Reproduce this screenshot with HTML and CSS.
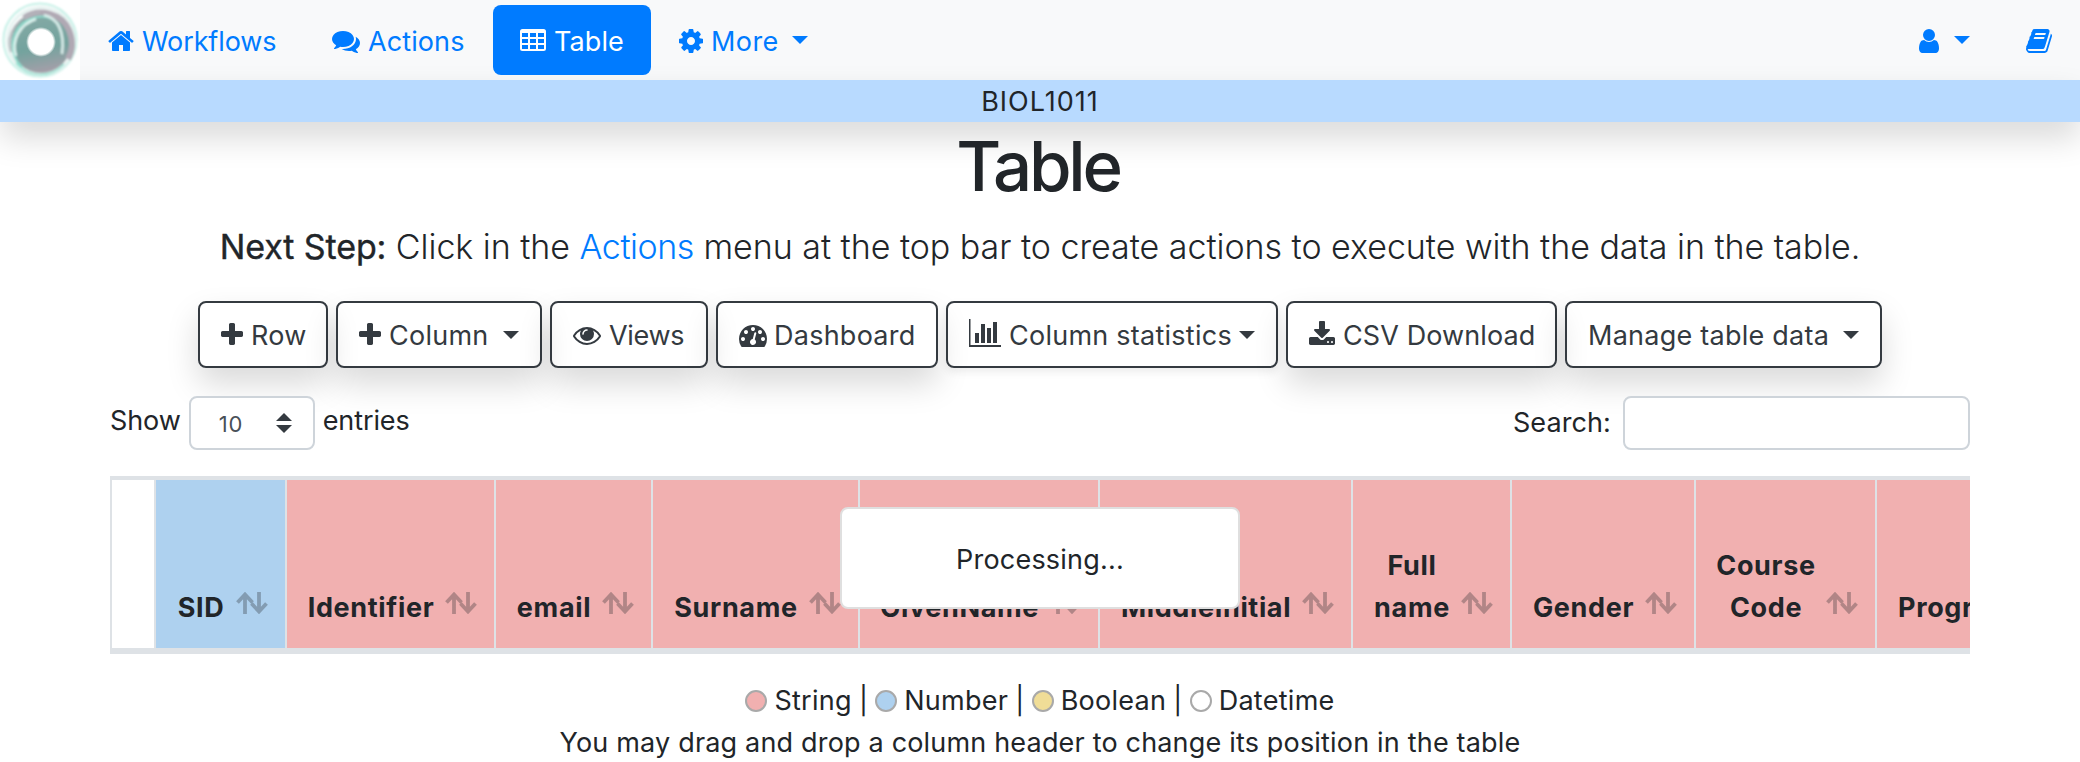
FILE: index.html
```html
<!DOCTYPE html>
<html lang="en">
<head>
<meta charset="utf-8">
<title>Table</title>
<link rel="stylesheet" href="styles.css">
</head>
<body>
<svg class="defs" width="0" height="0">
  <symbol id="sort" viewBox="0 0 32 22">
    <path d="M9 22V2M1.500 10.500 9 2.500l7.500 8M23 0v20M15.500 11.500 23 19.500l7.500-8" fill="none" stroke="currentColor" stroke-width="3.800"/>
  </symbol>
  <symbol id="plus" viewBox="0 0 1792 1792">
    <path d="M1600 736v192q0 40-28 68t-68 28h-416v416q0 40-28 68t-68 28h-192q-40 0-68-28t-28-68v-416h-416q-40 0-68-28t-28-68v-192q0-40 28-68t68-28h416v-416q0-40 28-68t68-28h192q40 0 68 28t28 68v416h416q40 0 68 28t28 68z"/>
  </symbol>
</svg>

<nav class="navbar">
  <a class="logo">
    <svg width="80" height="80" viewBox="0 0 80 80">
      <defs>
        <linearGradient id="disc" x1=".3" y1="0" x2=".5" y2="1">
          <stop offset="0" stop-color="#86aaa6"/><stop offset=".6" stop-color="#73a39e"/><stop offset="1" stop-color="#a59fa9"/>
        </linearGradient>
        <radialGradient id="hole"><stop offset=".82" stop-color="#fff"/><stop offset="1" stop-color="#fff" stop-opacity="0"/></radialGradient>
        <filter id="soft"><feGaussianBlur stdDeviation=".8"/></filter>
      </defs>
      <g filter="url(#soft)" fill="none">
        <circle cx="40" cy="40" r="36.500" stroke="#c4f0e6" stroke-width="2"/>
        <circle cx="41" cy="41" r="33.500" stroke="#e6f3f1" stroke-width="3"/>
        <circle cx="41" cy="43" r="30" fill="url(#disc)"/>
        <path d="M24 18C40 7 62 14 69 30c5 12 3 22-1 29" stroke="#b0a9b4" stroke-width="6"/>
        <path d="M11 52C5 34 18 15 40 12" stroke="#b4b6bb" stroke-width="2"/>
        <path d="M22 67C7 53 11 29 28 20c12-6 24-4 31 5" stroke="#8fdccd" stroke-width="2"/>
        <path d="M16 56C11 40 20 24 36 19" stroke="#dff4f0" stroke-width="2.500"/>
        <path d="M44 15c14 3 21 17 18 39" stroke="#dcefec" stroke-width="2.500"/>
        <path d="M16 63C28 77 50 79 64 64" stroke="#8ee0ce" stroke-width="1.500"/>
      </g>
      <circle cx="41" cy="42" r="15" fill="url(#hole)"/>
    </svg>
  </a>
  <a class="nav-item workflows">
    <svg class="icon" viewBox="0 0 1792 1792"><path d="M1472 992v480q0 26-19 45t-45 19h-384v-384h-256v384h-384q-26 0-45-19t-19-45v-480q0-1 .5-3t.5-3l575-474 575 474q1 2 1 6zm223-69l-62 74q-8 9-21 11h-3q-13 0-21-7l-692-577-692 577q-12 8-24 7-13-2-21-11l-62-74q-8-10-7-23.500t11-21.500l719-599q32-26 76-26t76 26l244 204v-195q0-14 9-23t23-9h192q14 0 23 9t9 23v408l219 182q10 8 11 21.500t-7 23.500z"/></svg>
    <span>Workflows</span>
  </a>
  <a class="nav-item actions">
    <svg class="icon" viewBox="0 0 1792 1792"><path d="M1408 768q0 139-94 257t-256.500 186.500-353.500 68.500q-86 0-176-16-124 88-278 128-36 9-86 16h-3q-11 0-20.500-8t-11.500-21q-1-3-1-6.500t.5-6.500 2-6l2.500-5 3.500-5.500 4-5 4.500-5 4-4.500q5-6 23-25t26-29.500 22.500-29 25-38.500 20.500-44q-124-72-195-177t-71-224q0-139 94-257t256.500-186.500 353.500-68.500 353.500 68.500 256.500 186.500 94 257zm384 256q0 120-71 224.500t-195 176.500q10 24 20.500 44t25 38.500 22.500 29 26 29.500 23 25q1 1 4 4.500t4.500 5 4 5 3.500 5.500l2.500 5 2 6 .5 6.500-1 6.500q-3 14-13 22t-22 7q-50-7-86-16-154-40-278-128-90 16-176 16-271 0-472-132 58 4 88 4 161 0 309-45t264-129q125-92 192-212t67-254q0-77-23-152 129 71 204 178t75 230z"/></svg>
    <span>Actions</span>
  </a>
  <a class="nav-item active">
    <svg class="icon" viewBox="0 0 28 28"><path fill-rule="evenodd" d="M3.500 2h21A2.500 2.500 0 0 1 27 4.500v17a2.500 2.500 0 0 1-2.500 2.500h-21A2.500 2.500 0 0 1 1 21.500v-17A2.500 2.500 0 0 1 3.500 2zM3 6v4h6V6zm8 0v4h6V6zm8 0v4h6V6zM3 12v4h6v-4zm8 0v4h6v-4zm8 0v4h6v-4zM3 18v4h6v-4zm8 0v4h6v-4zm8 0v4h6v-4z"/></svg>
    <span>Table</span>
  </a>
  <a class="nav-item more">
    <svg class="icon" viewBox="0 0 1792 1792"><path d="M1152 896q0-106-75-181t-181-75-181 75-75 181 75 181 181 75 181-75 75-181zm512-109v222q0 12-8 23t-20 13l-185 28q-19 54-39 91 35 50 107 138 10 12 10 25t-9 23q-27 37-99 108t-94 71q-12 0-26-9l-138-108q-44 23-91 38-16 136-29 186-7 28-36 28h-222q-14 0-24.500-8.500t-11.500-21.500l-28-184q-49-16-90-37l-141 107q-10 9-25 9-14 0-25-11-126-114-165-168-7-10-7-23 0-12 8-23 15-21 51-66.500t54-70.500q-27-50-41-99l-183-27q-13-2-21-12.500t-8-23.500v-222q0-12 8-23t19-13l186-28q14-46 39-92-40-57-107-138-10-12-10-24 0-10 9-23 26-36 98.500-107.500t94.500-71.500q13 0 26 10l138 107q44-23 91-38 16-136 29-186 7-28 36-28h222q14 0 24.500 8.500t11.500 21.500l28 184q49 16 90 37l142-107q9-9 24-9 13 0 25 10 129 119 165 170 7 8 7 22 0 12-8 23-15 21-51 66.500t-54 70.500q26 50 41 98l183 28q13 2 21 12.500t8 23.500z"/></svg>
    <span>More</span>
    <i class="caret"></i>
  </a>
  <a class="nav-item user">
    <svg class="icon" viewBox="0 0 1792 1792"><path d="M1536 1399q0 109-62.500 187t-150.500 78h-854q-88 0-150.500-78t-62.500-187q0-85 8.500-160.500t31.500-152 58.500-131 94-89 134.500-34.500q131 128 313 128t313-128q76 0 134.500 34.500t94 89 58.500 131 31.500 152 8.500 160.500zm-256-887q0 159-112.500 271.500t-271.500 112.500-271.500-112.500-112.500-271.500 112.500-271.500 271.500-112.500 271.500 112.500 112.500 271.500z"/></svg>
    <i class="caret"></i>
  </a>
  <a class="nav-item docs">
    <svg class="icon" viewBox="0 0 1792 1792"><path d="M1703 478q40 57 18 129l-275 906q-19 64-76.500 107.500t-122.500 43.500h-923q-77 0-148.500-53.500t-99.500-131.500q-24-67-2-127 0-4 3-27t4-37q1-8-3-21.500t-3-19.500q2-11 8-21t16.500-23.500 16.500-23.500q23-38 45-91.500t30-91.500q3-10 .5-30t-.5-28q3-11 17-28t17-23q21-36 42-92t25-90q1-9-2.500-32t.5-28q4-13 22-30.500t22-22.500q19-26 42.500-84.500t27.500-96.500q1-8-3-25.500t-2-26.500q2-8 9-18t18-23 17-21q8-12 16.500-30.500t15-35 16-36 19.500-32 26.500-23.500 36-11.500 47.500 5.500l-1 3q38-9 51-9h761q74 0 114 56t18 130l-274 906q-36 119-71.500 153.500t-128.500 34.500h-869q-27 0-38 15-11 16-1 43 24 70 144 70h923q29 0 56-15.500t35-41.500l300-987q7-22 5-57 38 15 59 43zm-1064 2q-4 13 2 22.500t20 9.500h608q13 0 25.500-9.500t16.500-22.500l21-64q4-13-2-22.500t-20-9.500h-608q-13 0-25.500 9.500t-16.500 22.500zm-83 256q-4 13 2 22.500t20 9.500h608q13 0 25.500-9.500t16.500-22.500l21-64q4-13-2-22.500t-20-9.500h-608q-13 0-25.500 9.500t-16.500 22.500z"/></svg>
  </a>
</nav>
<div class="workflow-name">BIOL1011</div>

<main>
  <h1>Table</h1>
  <p class="lead"><b>Next Step:</b> Click in the <a>Actions</a> menu at the top bar to create actions to execute with the data in the table.</p>

  <div class="toolbar">
    <button class="btn row-btn"><svg class="icon"><use href="#plus"/></svg><span>Row</span></button>
    <button class="btn column-btn"><svg class="icon"><use href="#plus"/></svg><span>Column</span><i class="caret"></i></button>
    <button class="btn views-btn">
      <svg class="icon" viewBox="0 0 1792 1792"><path d="M1664 960q-152-236-381-353 61 104 61 225 0 185-131.500 316.500t-316.500 131.500-316.500-131.500-131.500-316.500q0-121 61-225-229 117-381 353 133 205 333.500 326.500t434.500 121.500 434.500-121.500 333.500-326.500zm-720-384q0-20-14-34t-34-14q-125 0-214.500 89.500t-89.500 214.500q0 20 14 34t34 14 34-14 14-34q0-86 61-147t147-61q20 0 34-14t14-34zm848 384q0 34-20 69-140 230-376.500 368.500t-499.500 138.500-499.500-139-376.500-368q-20-35-20-69t20-69q140-229 376.500-368t499.500-139 499.500 139 376.500 368q20 35 20 69z"/></svg>
      <span>Views</span>
    </button>
    <button class="btn dashboard-btn">
      <svg class="icon" viewBox="0 0 1792 1792"><path d="M384 1152q0-53-37.500-90.500t-90.500-37.500-90.500 37.500-37.500 90.500 37.500 90.500 90.500 37.500 90.500-37.500 37.500-90.500zm192-448q0-53-37.500-90.500t-90.500-37.500-90.500 37.500-37.500 90.500 37.500 90.500 90.500 37.500 90.500-37.500 37.500-90.500zm428 481l101-382q6-26-7.500-48.500t-38.500-29.500-48 6.500-30 39.500l-101 382q-60 5-107 43.500t-63 98.500q-20 77 20 146t117 89 146-20 89-117q16-60-6-117t-72-91zm660-33q0-53-37.500-90.500t-90.500-37.500-90.500 37.500-37.500 90.500 37.500 90.500 90.500 37.500 90.500-37.500 37.500-90.500zm-640-640q0-53-37.500-90.500t-90.500-37.500-90.500 37.500-37.500 90.500 37.500 90.500 90.500 37.500 90.500-37.500 37.500-90.500zm448 192q0-53-37.500-90.500t-90.500-37.500-90.500 37.500-37.500 90.500 37.500 90.500 90.500 37.500 90.500-37.500 37.500-90.500zm320 448q0 261-141 483-19 29-54 29h-1402q-35 0-54-29-141-221-141-483 0-182 71-348t191-286 286-191 348-71 348 71 286 191 191 286 71 348z"/></svg>
      <span>Dashboard</span>
    </button>
    <button class="btn stats-btn">
      <svg class="icon chart" viewBox="0 0 32 28"><path d="M0 0h1.500v26h30.500v2H0zM6 14h4v10H6zM12 5h4v19h-4zM18 9h4v15h-4zM24 3h4v21h-4z"/></svg>
      <span>Column statistics</span><i class="caret"></i>
    </button>
    <button class="btn csv-btn">
      <svg class="icon" viewBox="0 0 1792 1792"><path d="M1344 1344q0-26-19-45t-45-19-45 19-19 45 19 45 45 19 45-19 19-45zm256 0q0-26-19-45t-45-19-45 19-19 45 19 45 45 19 45-19 19-45zm128-224v320q0 40-28 68t-68 28h-1472q-40 0-68-28t-28-68v-320q0-40 28-68t68-28h465l135 136q58 56 136 56t136-56l136-136h464q40 0 68 28t28 68zm-325-569q17 41-14 70l-448 448q-18 19-45 19t-45-19l-448-448q-31-29-14-70 17-39 59-39h256v-448q0-26 19-45t45-19h256q26 0 45 19t19 45v448h256q42 0 59 39z"/></svg>
      <span>CSV Download</span>
    </button>
    <button class="btn manage-btn"><span>Manage table data</span><i class="caret"></i></button>
  </div>

  <div class="controls">
    <label class="length">Show
      <span class="select"><span>10</span><svg width="16" height="20" viewBox="0 0 16 20"><path d="M0 8 8 0l8 8zM0 12h16l-8 8z"/></svg></span>
      entries</label>
    <label class="search">Search:<input type="text"></label>
  </div>

  <div class="table-wrap">
    <div class="thead">
      <div class="th blank"></div>
      <div class="th number">SID<svg class="sort"><use href="#sort"/></svg></div>
      <div class="th">Identifier<svg class="sort"><use href="#sort"/></svg></div>
      <div class="th">email<svg class="sort"><use href="#sort"/></svg></div>
      <div class="th">Surname<svg class="sort"><use href="#sort"/></svg></div>
      <div class="th">GivenName<svg class="sort"><use href="#sort"/></svg></div>
      <div class="th">MiddleInitial<svg class="sort"><use href="#sort"/></svg></div>
      <div class="th">Full<br>name<svg class="sort"><use href="#sort"/></svg></div>
      <div class="th">Gender<svg class="sort"><use href="#sort"/></svg></div>
      <div class="th">Course<br>Code<svg class="sort"><use href="#sort"/></svg></div>
      <div class="th last">Program<svg class="sort"><use href="#sort"/></svg></div>
    </div>
    <div class="processing">Processing...</div>
  </div>

  <div class="legend">
    <div><i class="dot string"></i> String | <i class="dot num"></i> Number | <i class="dot bool"></i> Boolean | <i class="dot"></i> Datetime</div>
    <div>You may drag and drop a column header to change its position in the table</div>
  </div>
</main>
</body>
</html>
```

FILE: styles.css
```css
* { box-sizing: border-box; }
body {
  margin: 0;
  height: 762px;
  overflow: hidden;
  background: #fff;
  color: #212529;
  font: 400 27px/42px Inter, "Liberation Sans", sans-serif;
  letter-spacing: .2px;
}
.defs { display: block; position: absolute; }
.icon { width: 28px; height: 28px; flex: none; fill: currentColor; }
.caret {
  flex: none;
  width: 0;
  height: 0;
  border: 8px solid transparent;
  border-top-color: currentColor;
  border-bottom: 0;
}

.navbar { display: flex; align-items: center; height: 80px; background: #f8f9fa; color: #007bff; }
.logo { width: 80px; height: 80px; background: #fff; }
.logo svg { display: block; }
.nav-item { display: flex; align-items: center; height: 70px; padding-top: 2px; border-radius: 8px; white-space: nowrap; }
.nav-item span, .btn span { padding-top: 2px; }
.nav-item .caret { margin-top: -2px; }
.workflows { width: 225px; padding-left: 27px; letter-spacing: -.12px; }
.workflows span { margin-left: 7px; }
.actions { width: 188px; padding-left: 27px; letter-spacing: .1px; }
.actions span { margin-left: 8px; }
.active { width: 158px; padding-left: 26px; background: #007bff; color: #fff; letter-spacing: .1px; }
.active span { margin-left: 7px; }
.more { padding-left: 26px; letter-spacing: .4px; }
.more span { width: 81px; margin: 0 0 0 6px; }
.user { margin-left: auto; width: 110px; }
.user .caret { margin-left: 11px; }
.docs { width: 55px; }

.workflow-name {
  height: 42px;
  padding-top: 1px;
  background: #b8daff;
  text-align: center;
  letter-spacing: 1px;
  box-shadow: 0 16px 32px rgba(0, 0, 0, .15);
}

h1 { margin: 2px 0 0 -4px; font-size: 69px; font-weight: 500; line-height: 84px; letter-spacing: -3.200px; text-align: center; }
.lead { margin: 13px 0 0; font-size: 34px; font-weight: 340; line-height: 52px; letter-spacing: -.03px; text-align: center; white-space: nowrap; }
.lead b { font-weight: 400; letter-spacing: -.1px; -webkit-text-stroke: .4px currentColor; }
.lead a { color: #007bff; letter-spacing: -.45px; }

.toolbar { display: flex; justify-content: center; gap: 8px; margin-top: 28px; }
.btn {
  display: flex;
  align-items: center;
  height: 67px;
  padding: 0;
  border: 2px solid #343a40;
  border-radius: 8px;
  background: transparent;
  color: #343a40;
  font: inherit;
  letter-spacing: .25px;
  white-space: nowrap;
  box-shadow: 0 16px 32px rgba(0, 0, 0, .15);
}
.row-btn { width: 130px; padding-left: 18px; }
.row-btn span { margin-left: 5px; }
.column-btn { width: 206px; padding-left: 18px; }
.column-btn span { width: 98px; margin: 0 16px 0 5px; }
.views-btn { width: 158px; padding-left: 21px; letter-spacing: -.3px; }
.views-btn span { margin-left: 8px; }
.dashboard-btn { width: 222px; padding-left: 21px; }
.dashboard-btn span { margin-left: 7px; }
.stats-btn { width: 332px; padding-left: 21px; box-shadow: 0 4px 8px rgba(0, 0, 0, .075); }
.stats-btn .chart { width: 32px; margin-top: -3px; }
.stats-btn span { width: 222px; margin: 0 8px 0 8px; }
.csv-btn { width: 271px; padding-left: 20px; letter-spacing: .1px; }
.csv-btn span { margin-left: 7px; }
.manage-btn { width: 317px; padding-left: 21px; }
.manage-btn span { width: 240px; margin-right: 15px; }

.controls { display: flex; justify-content: space-between; width: 1860px; height: 54px; margin: 28px auto 26px; }
.length { display: flex; align-items: center; height: 50px; letter-spacing: -.1px; }
.select {
  display: flex;
  justify-content: space-between;
  align-items: center;
  width: 126px;
  height: 54px;
  margin: 4px 8px 0 8px;
  padding: 2px 21px 0 28px;
  border: 2px solid #ced4da;
  border-radius: 8px;
  background: #fff;
  color: #495057;
  font-size: 22px;
  letter-spacing: .8px;
}
.select svg { margin-top: -2px; fill: #343a40; }
.search { display: flex; align-items: center; letter-spacing: .1px; }
.search input { width: 347px; height: 54px; margin-left: 12px; border: 2px solid #ced4da; border-radius: 8px; background: #fff; }

.table-wrap { position: relative; width: 1860px; margin: 0 auto; overflow: hidden; }
.thead {
  display: grid;
  grid-template-columns: 46px 131px 209px 157px 207px 240px 253px 159px 184px 181px 230px;
  height: 178px;
  border: solid #dee2e6;
  border-width: 4px 0 6px;
}
.th {
  position: relative;
  display: flex;
  align-items: flex-end;
  justify-content: center;
  padding: 0 60px 19px 21px;
  border-right: 2px solid #dee2e6;
  background: #f1b0b0;
  font-weight: 700;
  letter-spacing: .65px;
  text-align: center;
  white-space: nowrap;
}
.th.blank { padding: 0; border-left: 2px solid #dee2e6; background: #fff; }
.th.number { background: #aed1ef; }
.th.last { justify-content: flex-start; }
.sort { position: absolute; right: 17px; bottom: 34px; width: 32px; height: 22px; opacity: .3; }
.processing {
  position: absolute;
  left: 50%;
  top: 31px;
  width: 400px;
  height: 102px;
  margin-left: -200px;
  padding-top: 30px;
  border: 2px solid #dfdfdf;
  border-radius: 8px;
  background: #fff;
  text-align: center;
}

.legend { margin-top: 26px; text-align: center; letter-spacing: .18px; }
.legend div:first-child { letter-spacing: .28px; word-spacing: -.85px; }
.dot { display: inline-block; width: 22px; height: 22px; border: 2px solid #a9a9a9; border-radius: 50%; vertical-align: -2px; }
.dot.string { background: #f1b0b0; }
.dot.num { background: #aed1ef; }
.dot.bool { background: #f0dd97; }
```
